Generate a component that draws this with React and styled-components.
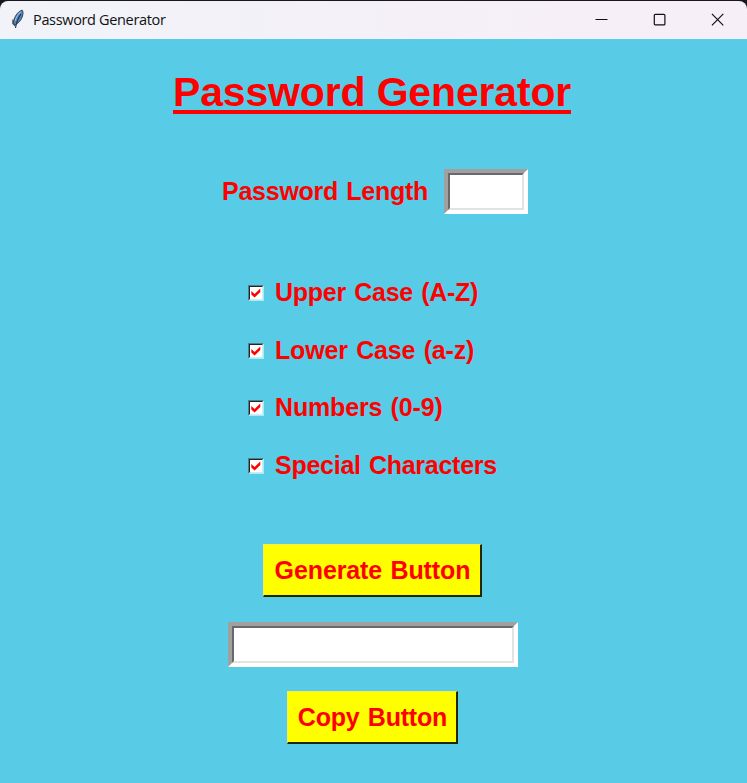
import React, { useState } from "react";
import styled, { createGlobalStyle } from "styled-components";

const GlobalStyle = createGlobalStyle`
  * { box-sizing: border-box; }
  body { margin: 0; background: #19171b; }
`;

const Window = styled.div`
  width: 747px;
  height: 783px;
  display: flex;
  flex-direction: column;
  overflow: hidden;
  background: #19171b;
  font-family: "Liberation Sans", Arial, sans-serif;
`;

const TitleBar = styled.header`
  height: 38px;
  margin-top: 1px;
  flex: none;
  display: flex;
  align-items: center;
  padding: 0 1px 0 10px;
  border-radius: 8px 8px 0 0;
  background: linear-gradient(90deg, #f1f3f9, #f6eff7 75%);
`;

const Caption = styled.span`
  flex: 1;
  margin-left: 7px;
  font: 14.5px/20px "Open Sans", "Noto Sans", sans-serif;
  letter-spacing: -0.34px;
  color: #111;
`;

const WindowButton = styled.button`
  width: 58px;
  height: 38px;
  padding: 0 0 1px;
  border: 0;
  background: none;
  display: grid;
  place-items: center;
`;

const Content = styled.main`
  flex: 1;
  display: flex;
  flex-direction: column;
  align-items: center;
  padding-right: 3px;
  background: #58cce7;
  color: #f00;
`;

const Heading = styled.h1`
  margin: 30px 0 0;
  width: 398px;
  height: 45px;
  border-bottom: 4px solid #f00;
  font-size: 41px;
  line-height: 46px;
  font-weight: bold;
  letter-spacing: -0.16px;
  white-space: nowrap;
`;

const Label = styled.span`
  font-size: 25px;
  line-height: 30px;
  font-weight: bold;
  letter-spacing: ${(p) => p.$spacing || 0}px;
  word-spacing: 1.5px;
  white-space: nowrap;
`;

const LengthRow = styled.label`
  width: 306px;
  height: 45px;
  margin: 55px 0 0 6px;
  display: flex;
  align-items: center;
  justify-content: space-between;
  ${Label} { padding-bottom: 2px; }
`;

const SunkenFrame = styled.span`
  display: block;
  width: ${(p) => p.$width}px;
  height: 45px;
  border: 4px solid;
  border-color: #a0a0a0 #fff #fff #a0a0a0;
  background: #fff;
`;

const Entry = styled.input`
  display: block;
  width: 100%;
  height: 100%;
  border: 2px solid;
  border-color: #696969 #e3e3e3 #e3e3e3 #696969;
  border-radius: 0;
  outline: 0;
  padding: 0 2px;
  background: #fff;
  color: #f00;
  font: bold 25px "Liberation Sans", Arial, sans-serif;
`;

const Options = styled.div`
  width: 248px;
  margin-top: 64px;
  display: grid;
  grid-auto-rows: 57.5px;
`;

const Option = styled.label`
  height: 30px;
  display: flex;
  align-items: center;
  gap: 11px;
  ${Label} { padding-bottom: 2px; }
`;

const CheckBox = styled.span`
  flex: none;
  width: 16px;
  height: 16px;
  border: 1px solid;
  border-color: #547d89 #9ff1f7 #9ff1f7 #547d89;
  display: grid;
  input { display: none; }
  svg {
    display: block;
    width: 14px;
    height: 14px;
    border: 1px solid;
    border-color: #182a30 #d8e9ed #d8e9ed #182a30;
    background: #fff;
  }
`;

const PushButton = styled.button`
  width: ${(p) => p.$width}px;
  height: 53px;
  padding: 0 0 0 1px;
  border: solid;
  border-width: 1px 2px 2px 1px;
  border-color: #f3f050 #202800 #202800 #f3f050;
  border-radius: 0;
  background: #ff0;
  color: #f00;
  font-family: inherit;
  display: grid;
  place-items: center;
`;

const Actions = styled.div`
  margin: 10px 0 0 2px;
  width: 290px;
  padding-top: 26px;
  display: flex;
  flex-direction: column;
  align-items: flex-start;
  gap: 24.5px;
  ${PushButton} { margin-left: 35px; }
  ${PushButton}:last-child { margin-left: 59px; }
`;

const choices = [
  ["Upper Case (A-Z)", -0.25],
  ["Lower Case (a-z)", -0.15],
  ["Numbers (0-9)", -0.15],
  ["Special Characters", -0.26],
];

const Feather = () => (
  <svg width="16" height="22" viewBox="0 0 16 22">
    <path d="M12.2 1.2C9 1.8 5.2 6 4 11l-.8 3.2 2 1.8c3.4-2 6.2-5 7.3-9 .6-2.2.8-4.5-.3-5.8Z" fill="#4b86c0" stroke="#3b3d42" />
    <path d="M11.2 2.6C8.2 4.4 6.2 8 5.2 12" fill="none" stroke="#a9c4df" strokeWidth="1" />
    <path d="M11 5C8 9 6.4 13 5.5 19" fill="none" stroke="#1d304d" strokeWidth="1.1" />
    <path d="M3 10.5v4l2.2 2.2" fill="none" stroke="#4c4d4f" strokeWidth="1.5" />
  </svg>
);

function CheckOption({ text, spacing }) {
  const [checked, setChecked] = useState(true);
  return (
    <Option>
      <CheckBox>
        <input type="checkbox" checked={checked} onChange={(e) => setChecked(e.target.checked)} />
        <svg viewBox="0 0 12 12">
          {checked && <path d="M1.3 4 4.6 7 10.3 1.4V5L4.6 10.6 1.3 7.6Z" fill="#f00" />}
        </svg>
      </CheckBox>
      <Label $spacing={spacing}>{text}</Label>
    </Option>
  );
}

export default function App() {
  return (
    <Window>
      <GlobalStyle />
      <TitleBar>
        <Feather />
        <Caption>Password Generator</Caption>
        <WindowButton aria-label="Minimize">
          <svg width="13" height="13" viewBox="0 0 13 13"><path d="M.5 6.5h12" stroke="#111" /></svg>
        </WindowButton>
        <WindowButton aria-label="Maximize">
          <svg width="13" height="13" viewBox="0 0 13 13"><rect x="1.3" y="1.3" width="10.6" height="10.6" rx="1" fill="none" stroke="#111" strokeWidth="1.2" /></svg>
        </WindowButton>
        <WindowButton aria-label="Close">
          <svg width="13" height="13" viewBox="0 0 13 13"><path d="m.9.9 11.4 11.4M12.3.9.9 12.3" stroke="#111" strokeWidth="1.2" /></svg>
        </WindowButton>
      </TitleBar>
      <Content>
        <Heading>Password Generator</Heading>
        <LengthRow>
          <Label $spacing={-0.25}>Password Length</Label>
          <SunkenFrame $width={84}><Entry /></SunkenFrame>
        </LengthRow>
        <Options>
          {choices.map(([text, spacing]) => (
            <CheckOption key={text} text={text} spacing={spacing} />
          ))}
        </Options>
        <Actions>
          <PushButton $width={219}><Label $spacing={-0.1}>Generate Button</Label></PushButton>
          <SunkenFrame $width={290}><Entry /></SunkenFrame>
          <PushButton $width={171}><Label $spacing={-0.2}>Copy Button</Label></PushButton>
        </Actions>
      </Content>
    </Window>
  );
}
